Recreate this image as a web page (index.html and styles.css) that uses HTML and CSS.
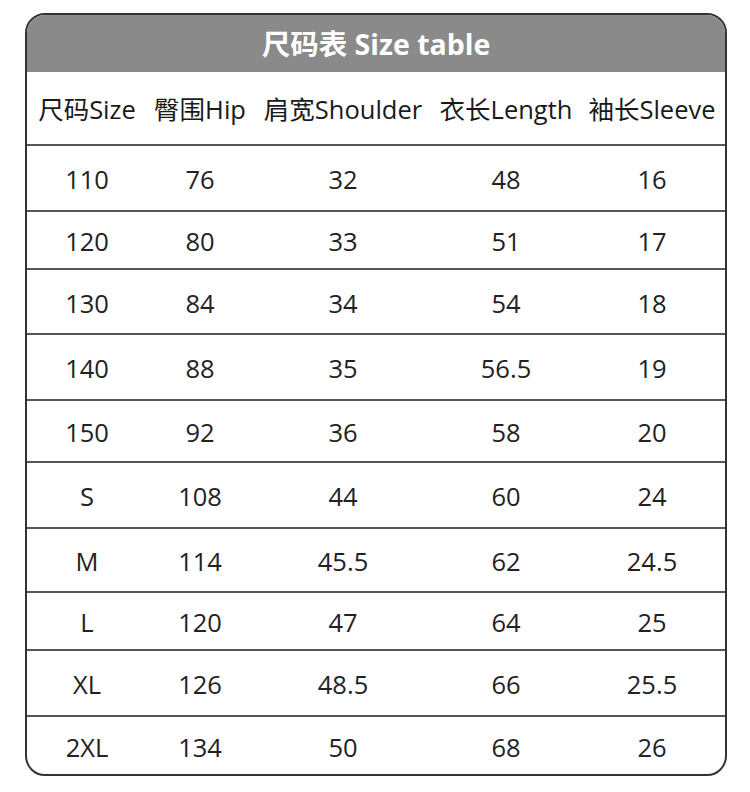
FILE: index.html
```html
<!DOCTYPE html>
<html lang="zh">
<head>
<meta charset="utf-8">
<link rel="stylesheet" href="styles.css">
</head>
<body>
<div class="box">
  <div class="title">尺码表 Size table</div>
  <div class="row head">
    <div>尺码Size</div><div>臀围Hip</div><div>肩宽Shoulder</div><div>衣长Length</div><div>袖长Sleeve</div>
  </div>
  <div class="row"><div>110</div><div>76</div><div>32</div><div>48</div><div>16</div></div>
  <div class="row"><div>120</div><div>80</div><div>33</div><div>51</div><div>17</div></div>
  <div class="row"><div>130</div><div>84</div><div>34</div><div>54</div><div>18</div></div>
  <div class="row"><div>140</div><div>88</div><div>35</div><div>56.5</div><div>19</div></div>
  <div class="row"><div>150</div><div>92</div><div>36</div><div>58</div><div>20</div></div>
  <div class="row"><div>S</div><div>108</div><div>44</div><div>60</div><div>24</div></div>
  <div class="row"><div>M</div><div>114</div><div>45.5</div><div>62</div><div>24.5</div></div>
  <div class="row"><div>L</div><div>120</div><div>47</div><div>64</div><div>25</div></div>
  <div class="row"><div>XL</div><div>126</div><div>48.5</div><div>66</div><div>25.5</div></div>
  <div class="row"><div>2XL</div><div>134</div><div>50</div><div>68</div><div>26</div></div>
</div>
</body>
</html>
```
FILE: styles.css
```css
html, body {
  margin: 0;
  padding: 0;
  background: #fff;
}
body {
  font-family: "Open Sans", "Noto Sans CJK SC", sans-serif;
  color: #222;
}
.box {
  margin: 13px 0 0 25px;
  width: 698px;
  border: 2px solid #333;
  border-radius: 20px;
  overflow: hidden;
}
.title {
  height: 57px;
  background: #8a8a8a;
  color: #fff;
  font-weight: bold;
  font-size: 28.5px;
  display: flex;
  align-items: center;
  justify-content: center;
  padding-bottom: 3px;
  box-sizing: border-box;
}
.row {
  display: grid;
  grid-template-columns: 120px 106px 180px 146px 146px;
  align-items: center;
  justify-items: center;
  border-top: 2px solid #555;
  box-sizing: border-box;
  font-size: 25.5px;
  padding-top: 2px;
}
.row > div {
  white-space: nowrap;
}
.head {
  border-top: none;
  height: 72px;
  font-size: 25.5px;
  color: #1a1a1a;
  padding-top: 0;
  padding-bottom: 1px;
}
.row:nth-child(3) { height: 66px; }
.row:nth-child(4) { height: 58px; }
.row:nth-child(5) { height: 65px; }
.row:nth-child(6) { height: 66px; }
.row:nth-child(7) { height: 62px; }
.row:nth-child(8) { height: 66px; }
.row:nth-child(9) { height: 64px; }
.row:nth-child(10) { height: 58px; }
.row:nth-child(11) { height: 66px; }
.row:nth-child(12) { height: 59px; }
```
